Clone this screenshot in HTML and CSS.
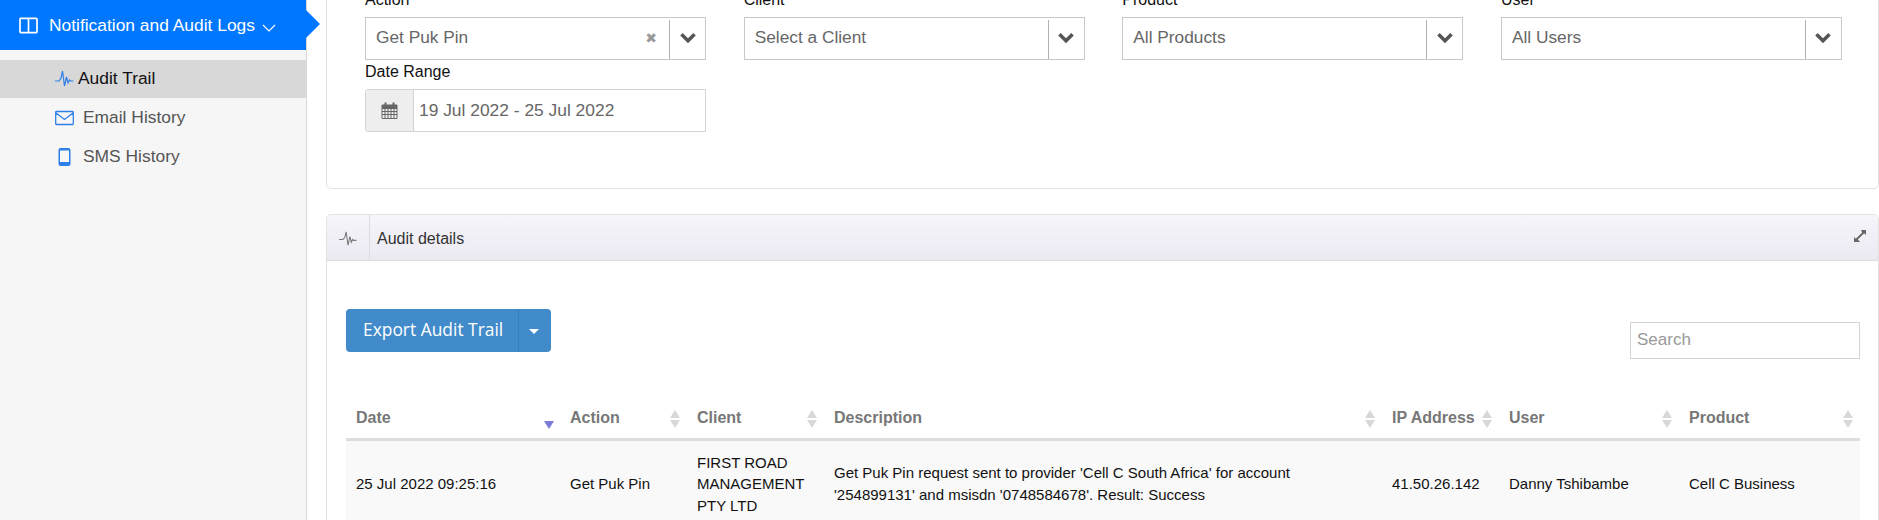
FILE: index.html
```html
<html>
	<head>
		<link rel="stylesheet" href="styles.css">
	</head>
	<body>
		<div class="page">
			<div class="sidebar">
				<div class="navHead">
					<svg class="navHeadIcon" viewBox="0 0 20 18"><path d="M2 1.500h16a1 1 0 0 1 1 1v13a1 1 0 0 1-1 1H2a1 1 0 0 1-1-1v-13a1 1 0 0 1 1-1zM10 1.500v15" fill="none" stroke="#fff" stroke-width="1.800"/></svg>
					<span>Notification and Audit Logs</span>
					<svg class="navHeadCaret" viewBox="0 0 14 8"><path d="M1 1l6 6 6-6" fill="none" stroke="#fff" stroke-width="1.200"/></svg>
				</div>
				<div class="navItem navActive">
					<svg class="pulse" viewBox="0 0 19 16"><path d="M0 10h4l2-3 1.500-7 2 15 2-9 1.500 6 1.500-3 1 1h3" fill="none" stroke="#2f7fe8" stroke-width="1.200"/></svg>
					<span>Audit Trail</span>
				</div>
				<div class="navItem">
					<svg class="navIcon" viewBox="0 0 19 15"><path d="M1.500 1h16a.8.8 0 0 1 .8.800v11.400a.8.8 0 0 1-.8.800h-16a.8.8 0 0 1-.8-.8V1.800a.8.8 0 0 1 .8-.8zM1 2.500l8.500 6.500 8.500-6.500" fill="none" stroke="#2f7fe8" stroke-width="1.300"/></svg>
					<span>Email History</span>
				</div>
				<div class="navItem">
					<svg class="navIcon" viewBox="0 0 19 18"><path d="M5.500 0h8a2 2 0 0 1 2 2v14a2 2 0 0 1-2 2h-8a2 2 0 0 1-2-2V2a2 2 0 0 1 2-2zM5 2.500v11.500h9V2.500z" fill="#2f7fe8" fill-rule="evenodd"/></svg>
					<span>SMS History</span>
				</div>
			</div>

			<div class="main">
				<div class="panel filterPanel">
					<div class="filters">
						<div class="field">
							<label>Action</label>
							<div class="select">
								<span class="selectText">Get Puk Pin</span>
								<span class="clear">&#10006;</span>
								<span class="selectBtn"><svg viewBox="0 0 16 11"><path d="M2 2l6 6 6-6" fill="none" stroke="#555" stroke-width="3.200"/></svg></span>
							</div>
						</div>
						<div class="field">
							<label>Client</label>
							<div class="select">
								<span class="selectText">Select a Client</span>
								<span class="selectBtn"><svg viewBox="0 0 16 11"><path d="M2 2l6 6 6-6" fill="none" stroke="#555" stroke-width="3.200"/></svg></span>
							</div>
						</div>
						<div class="field">
							<label>Product</label>
							<div class="select">
								<span class="selectText">All Products</span>
								<span class="selectBtn"><svg viewBox="0 0 16 11"><path d="M2 2l6 6 6-6" fill="none" stroke="#555" stroke-width="3.200"/></svg></span>
							</div>
						</div>
						<div class="field">
							<label>User</label>
							<div class="select">
								<span class="selectText">All Users</span>
								<span class="selectBtn"><svg viewBox="0 0 16 11"><path d="M2 2l6 6 6-6" fill="none" stroke="#555" stroke-width="3.200"/></svg></span>
							</div>
						</div>
						<div class="field">
							<label>Date Range</label>
							<div class="dateBox">
								<span class="dateAddon">
									<svg viewBox="0 0 17 17"><path d="M1 3h15v13.500H1zM1 6.500h15M4 6.500v10M7 6.500v10M10 6.500v10M13 6.500v10M1 9.500h15M1 12.500h15" fill="none" stroke="#666" stroke-width="1"/><path d="M1 3h15v3.500H1z" fill="#666"/><path d="M4.500 .5v4M12.500 .5v4" stroke="#666" stroke-width="2"/></svg>
								</span>
								<span class="dateText">19 Jul 2022 - 25 Jul 2022</span>
							</div>
						</div>
					</div>
				</div>

				<div class="panel auditPanel">
					<div class="panelHead">
						<span class="panelIcon">
							<svg viewBox="0 0 19 16"><path d="M0 9h4l2-2 1.500-6 2 14 2-9 1.500 6 1.500-3 1 1h3" fill="none" stroke="#777" stroke-width="1.100"/></svg>
						</span>
						<span class="panelTitle">Audit details</span>
						<svg class="expand" viewBox="0 0 14 14"><path d="M8 1h5v5l-1.800-1.800-6.400 6.400L7 13H1V8l1.800 1.800 6.400-6.400z" fill="#666"/></svg>
					</div>
					<div class="panelBody">
						<div class="toolbar">
							<div class="exportBtn">
								<span class="exportLabel">Export Audit Trail</span>
								<span class="exportCaret"></span>
							</div>
							<div class="search">Search</div>
						</div>
						<table class="grid">
							<thead>
								<tr>
									<th class="colDate sortDesc">Date</th>
									<th class="colAction">Action</th>
									<th class="colClient">Client</th>
									<th class="colDesc">Description</th>
									<th class="colIp">IP Address</th>
									<th class="colUser">User</th>
									<th class="colProduct">Product</th>
								</tr>
							</thead>
							<tbody>
								<tr>
									<td>25 Jul 2022 09:25:16</td>
									<td>Get Puk Pin</td>
									<td>FIRST ROAD MANAGEMENT PTY LTD</td>
									<td>Get Puk Pin request sent to provider 'Cell C South Africa' for account '254899131' and msisdn '0748584678'. Result: Success</td>
									<td>41.50.26.142</td>
									<td>Danny Tshibambe</td>
									<td>Cell C Business</td>
								</tr>
							</tbody>
						</table>
					</div>
				</div>
			</div>
		</div>
	</body>
</html>
```

FILE: styles.css
```css
html, body {
	margin: 0;
	padding: 0;
	width: 100%;
	height: 100%;
	overflow: hidden;
	background: #fff;
	font-family: "Liberation Sans", Arial, sans-serif;
}

.page {
	display: flex;
	height: 100%;
}

/* sidebar */
.sidebar {
	flex: none;
	width: 306px;
	background: #f6f6f6;
	border-right: 1px solid #d8d8d8;
}

.navHead {
	position: relative;
	display: flex;
	align-items: center;
	height: 50px;
	margin-bottom: 10px;
	padding-left: 19px;
	background: #0077ff;
	color: #fff;
	font-size: 17.4px;
}

.navHead::after {
	content: "";
	position: absolute;
	left: 306px;
	top: 10px;
	border-left: 14px solid #0077ff;
	border-top: 14px solid transparent;
	border-bottom: 14px solid transparent;
}

.navHeadIcon {
	width: 19px;
	height: 17px;
	margin-right: 11px;
}

.navHeadCaret {
	width: 14px;
	height: 8px;
	margin: 5px 0 0 7px;
}

.navItem {
	display: flex;
	align-items: center;
	height: 39px;
	padding-left: 55px;
	color: #555;
	font-size: 17.4px;
}

.navActive {
	height: 38px;
	padding-bottom: 1px;
	box-sizing: border-box;
	background: #d8d8d8;
	color: #111;
}

.pulse {
	width: 19px;
	height: 16px;
	margin-right: 4px;
}

.navIcon {
	width: 19px;
	height: 18px;
	margin-right: 9px;
}

/* main column */
.main {
	flex: 1;
	padding-left: 19px;
	margin-top: -41px;
}

.panel {
	border: 1px solid #e2e2e2;
	border-radius: 5px;
	background: #fff;
}

.filterPanel {
	height: 230px;
	margin-bottom: 25px;
	box-sizing: border-box;
	padding: 28px 0 0 38px;
}

.filters {
	display: grid;
	grid-template-columns: repeat(4, 341px);
	column-gap: 37.67px;
}

.field label {
	display: block;
	height: 23px;
	margin-bottom: 6px;
	line-height: 24px;
	font-size: 16px;
	color: #111;
}

.select {
	display: flex;
	align-items: center;
	box-sizing: border-box;
	height: 43px;
	padding-bottom: 2px;
	border: 1px solid #c8c8c8;
	color: #666;
	font-size: 17.3px;
}

.selectText {
	flex: 1;
	padding-left: 10px;
}

.clear {
	margin-right: 12px;
	color: #999;
	font-size: 14px;
	font-family: "DejaVu Sans", sans-serif;
}

.selectBtn {
	display: flex;
	align-items: center;
	justify-content: center;
	width: 35px;
	height: 39px;
	margin-top: 4px;
	border-left: 1px solid #b0b0b0;
}

.selectBtn svg {
	width: 18px;
	height: 12px;
	margin-bottom: 3px;
}

.dateBox {
	display: flex;
	align-items: center;
	box-sizing: border-box;
	height: 43px;
	border: 1px solid #d4d4d4;
	border-radius: 3px 0 0 3px;
	color: #666;
	font-size: 17.4px;
}

.dateAddon {
	display: flex;
	align-items: center;
	justify-content: center;
	width: 47px;
	height: 100%;
	background: #eee;
	border-right: 1px solid #d4d4d4;
	border-radius: 3px 0 0 3px;
}

.dateAddon svg {
	width: 17px;
	height: 17px;
}

.dateText {
	padding-left: 5px;
}

/* audit panel */
.panelHead {
	display: flex;
	align-items: center;
	height: 45px;
	background: linear-gradient(#f6f5fa, #ebeaf3);
	border-bottom: 1px solid #dedede;
	border-radius: 5px 5px 0 0;
	font-size: 16px;
	color: #333;
}

.panelIcon {
	display: flex;
	align-items: center;
	justify-content: center;
	width: 42px;
	height: 100%;
	border-right: 1px solid #dcdcdc;
}

.panelIcon svg {
	width: 18px;
	height: 15px;
	margin-top: 2px;
}

.panelTitle {
	flex: 1;
	padding: 2px 0 0 7px;
}

.expand {
	width: 14px;
	height: 14px;
	margin: 0 11px 4px 0;
}

.panelBody {
	padding: 48px 18px 0 19px;
}

.toolbar {
	display: flex;
	justify-content: space-between;
	height: 92px;
}

.exportBtn {
	display: flex;
	height: 43px;
	background: #428bca;
	border-radius: 4px;
	color: #fff;
	font-family: "Open Sans", sans-serif;
	font-size: 17.4px;
	line-height: 41px;
}

.exportLabel {
	padding: 0 15px 0 17px;
	border-right: 1px solid #357ebd;
}

.exportCaret {
	align-self: center;
	width: 0;
	height: 0;
	margin: 2px 12px 0 10px;
	border-top: 5px solid #fff;
	border-left: 5px solid transparent;
	border-right: 5px solid transparent;
}

.search {
	box-sizing: border-box;
	width: 230px;
	height: 37px;
	margin-top: 13px;
	padding-left: 6px;
	border: 1px solid #d4d4d4;
	color: #999;
	font-size: 17px;
	line-height: 34px;
}

.grid {
	table-layout: fixed;
	width: 1514px;
	border-collapse: collapse;
	font-size: 15px;
	color: #111;
}

.grid th {
	position: relative;
	height: 38px;
	padding: 0 10px 3px;
	text-align: left;
	font-size: 16px;
	color: #777;
	border-bottom: 3px solid #ddd;
}

/* sort arrows */
.grid th::before {
	content: "";
	position: absolute;
	right: 7px;
	top: 9px;
	border-bottom: 8px solid #d8d8d8;
	border-left: 5.5px solid transparent;
	border-right: 5.5px solid transparent;
}

.grid th::after {
	content: "";
	position: absolute;
	right: 7px;
	top: 19px;
	border-top: 8px solid #d8d8d8;
	border-left: 5.5px solid transparent;
	border-right: 5.5px solid transparent;
}

.grid th.sortDesc::before {
	display: none;
}

.grid th.sortDesc::after {
	right: 6px;
	top: 20px;
	border-top: 8px solid #7b7bd8;
}

.grid td {
	padding: 11px 10px 9px;
	background: #f9f9f9;
	line-height: 21.5px;
}

.colDate { width: 194px; }
.colAction { width: 107px; }
.colClient { width: 117px; }
.colDesc { width: 538px; }
.colIp { width: 97px; }
.colUser { width: 160px; }
.colProduct { width: 161px; }
```
